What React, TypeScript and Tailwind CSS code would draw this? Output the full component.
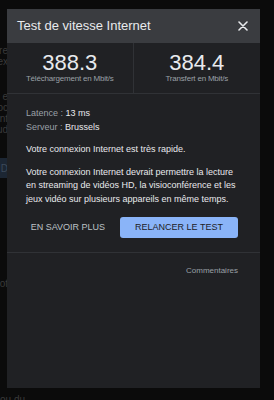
export default function App() {
  const ghost = 'text-[10px] leading-[11px] text-[#3a3a3a] whitespace-nowrap';
  return (
    <div className="relative w-[274px] h-[400px] overflow-hidden bg-[#0b0b0b]" style={{ fontFamily: '"Liberation Sans", Arial, sans-serif' }}>
      {/* dimmed page behind the dialog */}
      <div className="flex flex-col pt-[45px] w-[8px] overflow-hidden items-end">
        <div className={ghost}>re</div>
        <div className={ghost}>ex</div>
        <div className="h-[24px]" />
        <div className={ghost}>e</div>
        <div className={ghost}>oc</div>
        <div className={ghost}>nt</div>
        <div className={ghost}>ud</div>
        <div className="h-[23px]" />
        <div className="w-[8px] h-[20px] bg-[#1c2633] flex items-center justify-end">
          <span className="text-[10px] text-[#3d4a5a]">D</span>
        </div>
        <div className="h-[100px]" />
        <div className={ghost}>ot</div>
      </div>
      <div className="absolute left-0 top-[392px] text-[10px] text-[#3a3a3a] whitespace-nowrap">ou du</div>

      {/* dialog */}
      <div className="absolute left-[7px] top-[9px] w-[253px] h-[379px] bg-[#202124] flex flex-col">
        <div className="h-[34px] bg-[#3a3c40] flex items-center justify-between pl-[10px] pr-[12px] shrink-0">
          <span className="text-[13px] text-[#e8eaed]">Test de vitesse Internet</span>
          <svg width="10" height="10" viewBox="0 0 10 10" stroke="#e8eaed" strokeWidth="1.6" strokeLinecap="round">
            <path d="M1 1 L9 9 M9 1 L1 9" />
          </svg>
        </div>

        <div className="grid grid-cols-2 h-[51px] border-b border-[#303236] shrink-0">
          <div className="flex flex-col items-center pt-[9px] border-r border-[#303236]">
            <span className="text-[22px] leading-[22px] text-[#e8eaed]">388.3</span>
            <span className="text-[8px] leading-[10px] text-[#9aa0a6] tracking-[-0.2px]">Téléchargement en Mbit/s</span>
          </div>
          <div className="flex flex-col items-center pt-[9px]">
            <span className="text-[22px] leading-[22px] text-[#e8eaed]">384.4</span>
            <span className="text-[8px] leading-[10px] text-[#9aa0a6] tracking-[-0.2px]">Transfert en Mbit/s</span>
          </div>
        </div>

        <div className="px-[19px] pt-[13px] text-[9px] leading-[13.5px] text-[#e8eaed]">
          <div><span className="text-[#9aa0a6]">Latence : </span>13 ms</div>
          <div><span className="text-[#9aa0a6]">Serveur : </span>Brussels</div>
          <p className="mt-[9px]">Votre connexion Internet est très rapide.</p>
          <p className="mt-[9px]">
            Votre connexion Internet devrait permettre la lecture en streaming de vidéos HD, la visioconférence et les jeux vidéo sur plusieurs appareils en même temps.
          </p>
        </div>

        <div className="flex items-center justify-end gap-[15px] pr-[22px] mt-[11px] pb-[14px] border-b border-[#303236]">
          <span className="text-[9px] text-[#bdc1c6]">EN SAVOIR PLUS</span>
          <div className="w-[118px] h-[21px] rounded-[3px] bg-[#8ab4f8] flex items-center justify-center">
            <span className="text-[9px] text-[#202124]">RELANCER LE TEST</span>
          </div>
        </div>

        <div className="flex justify-end pr-[22px] pt-[12px]">
          <span className="text-[8px] text-[#9aa0a6]">Commentaires</span>
        </div>
      </div>
    </div>
  );
}
